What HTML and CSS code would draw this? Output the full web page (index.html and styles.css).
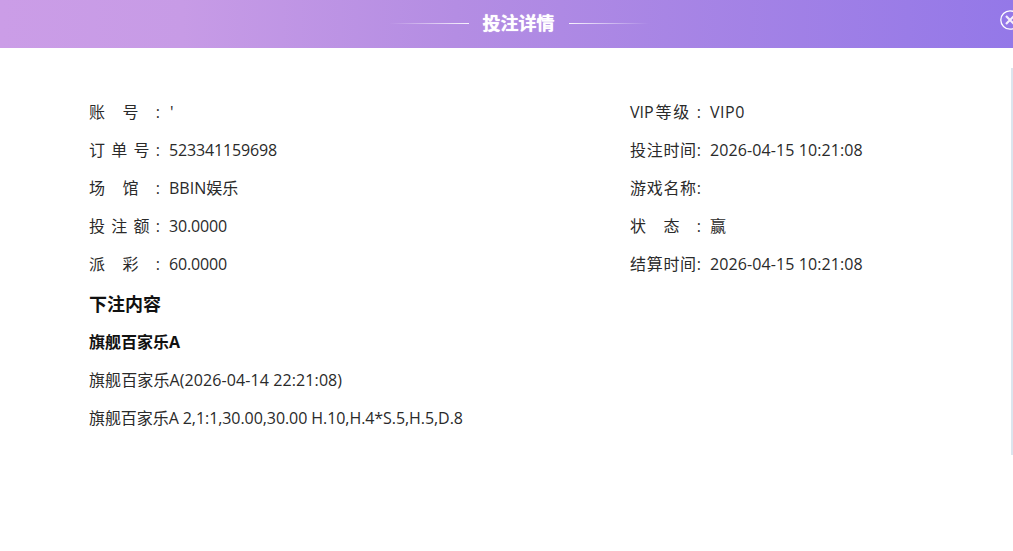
FILE: index.html
```html
<!DOCTYPE html>
<html lang="zh-CN">
<head>
  <meta charset="UTF-8" />
  <meta name="viewport" content="width=device-width, initial-scale=1.0"/>
  <title>投注详情</title>
  <link rel="stylesheet" href="styles.css">
</head>
<body>
  <header class="modal-head">
    <span class="head-line head-line-left"></span>
    <h1>投注详情</h1>
    <span class="head-line head-line-right"></span>
    <svg class="close-btn" width="20" height="20" viewBox="0 0 20 20" aria-label="关闭">
      <circle cx="10" cy="10" r="9.2" fill="none" stroke="#fff" stroke-width="1.3"/>
      <path d="M6 6 14 14M14 6 6 14" fill="none" stroke="#f4eefc" stroke-width="2.2"/>
    </svg>
  </header>

  <main class="modal-body">
    <div class="info-grid">
      <div class="info-col">
        <div class="row"><span class="key">账 号 :</span><span class="quote">'</span></div>
        <div class="row"><span class="key">订 单 号 :</span><span class="num">523341159698</span></div>
        <div class="row"><span class="key">场 馆 :</span><span>BBIN娱乐</span></div>
        <div class="row"><span class="key">投 注 额 :</span><span class="num">30.0000</span></div>
        <div class="row"><span class="key">派 彩 :</span><span class="num">60.0000</span></div>
      </div>
      <div class="info-col">
        <div class="row"><span class="key">VIP等级 :</span><span class="vip">VIP0</span></div>
        <div class="row"><span class="key">投注时间:</span><span class="date">2026-04-15 10:21:08</span></div>
        <div class="row"><span class="key">游戏名称:</span><span></span></div>
        <div class="row"><span class="key">状 态 :</span><span>赢</span></div>
        <div class="row"><span class="key">结算时间:</span><span class="date">2026-04-15 10:21:08</span></div>
      </div>
    </div>
    <h2 class="row">下注内容</h2>
    <h3 class="row">旗舰百家乐A</h3>
    <p class="row date">旗舰百家乐A(2026-04-14 22:21:08)</p>
    <p class="row num-line">旗舰百家乐A 2,1:1,30.00,30.00 H.10,H.4*S.5,H.5,D.8</p>
  </main>
  <div class="edge-line"></div>
</body>
</html>
```

FILE: styles.css
```css
html, body {
  height: 100%;
}

body {
  margin: 0;
  background: #ffffff;
  color: #2a2a2a;
  font-family: "Open Sans", "Noto Sans CJK SC", sans-serif;
  font-size: 16px;
  overflow: hidden;
  position: relative;
}

.modal-head {
  box-sizing: border-box;
  height: 48px;
  padding: 0 0 2px 24px;
  display: flex;
  align-items: center;
  justify-content: center;
  gap: 14px;
  background: linear-gradient(90deg, #cb9de7 0%, #c79be6 18%, #b48de3 45%, #9478e8 100%);
}

.modal-head h1 {
  margin: 0;
  color: #ffffff;
  font-size: 18px;
  font-weight: 700;
  line-height: 46px;
  text-shadow: 0 0 1px #ffffff;
}

.head-line {
  width: 80px;
  height: 1px;
}

.head-line-left {
  background: linear-gradient(90deg, rgba(255,255,255,0), rgba(255,255,255,0.9));
}

.head-line-right {
  background: linear-gradient(90deg, rgba(255,255,255,0.9), rgba(255,255,255,0));
}

.close-btn {
  position: absolute;
  top: 10px;
  left: 1000px;
}

.modal-body {
  padding: 45px 0 0 89px;
}

.info-grid {
  display: grid;
  grid-template-columns: 541px 1fr;
  margin-bottom: 2px;
}

.row {
  display: flex;
  height: 38px;
  margin: 0;
  align-items: center;
  line-height: 38px;
  white-space: nowrap;
}

.key {
  width: 71px;
  margin-right: 9px;
  text-align: justify;
  text-align-last: justify;
}

.quote {
  padding-left: 1px;
}

.num {
  letter-spacing: -0.15px;
}

.date {
  letter-spacing: 0.1px;
}

.vip {
  letter-spacing: 0.5px;
}

.num-line {
  letter-spacing: -0.07px;
}

h2.row {
  font-size: 18px;
  font-weight: 700;
  color: #111111;
}

h3.row {
  font-size: 16px;
  font-weight: 700;
  color: #111111;
}

.edge-line {
  position: absolute;
  top: 68px;
  right: 0;
  width: 2px;
  height: 387px;
  background: #dbe5ee;
}
```
